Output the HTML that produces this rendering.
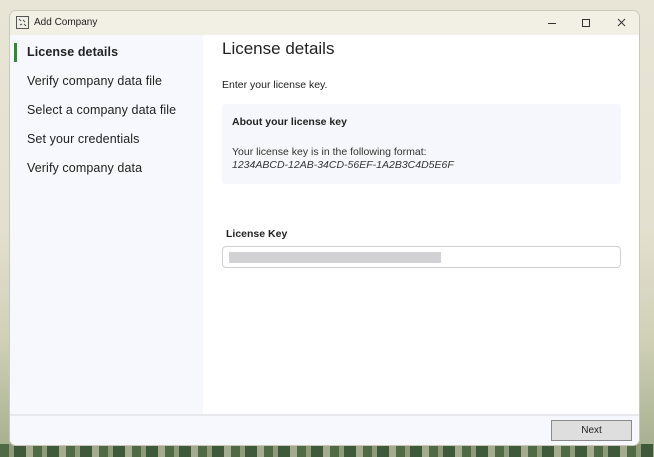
<!DOCTYPE html>
<html><head><style>
*{margin:0;padding:0;box-sizing:border-box}
body{width:654px;height:457px;overflow:hidden;font-family:"Liberation Sans",sans-serif;position:relative;
background:linear-gradient(180deg,#e9e5d6 0%,#e4e0cf 50%,#cfd0b6 75%,#a3ad8c 100%);}
.bot{position:absolute;left:0;top:444px;width:654px;height:13px;background:repeating-linear-gradient(90deg,#4f6a45 0 9px,#8f9a78 9px 14px,#3f5a3a 14px 26px,#a5ab8f 26px 33px)}
.win{position:absolute;left:9px;top:10px;width:631px;height:436px;background:#fff;border:1px solid #c9c7bb;border-radius:7px;overflow:hidden}
.tb{height:24px;background:#f2f0e5;position:relative;font-size:10px;color:#222}
.tb .t{position:absolute;left:24px;top:6px}
.nav{position:absolute;left:0;top:24px;width:193px;height:380px;background:#f7f8fd}
.nav div{position:absolute;left:17px;font-size:12.5px;color:#222;letter-spacing:0.1px}
.main{position:absolute;left:193px;top:24px;right:0;height:380px}
.foot{position:absolute;left:0;top:403px;width:100%;height:33px;background:#f7f8fd;border-top:2px solid #e8e8ec}
</style></head><body>
<div class="bot"></div>
<div class="win">
 <div class="tb">
  <svg style="position:absolute;left:6px;top:5px" width="13" height="13" viewBox="0 0 13 13"><rect x=".5" y=".5" width="12" height="12" fill="none" stroke="#555"/><path d="M3 3l2 2M10 10l-2-2M4 9l2-1M7 4l2 2" stroke="#456" fill="none"/></svg>
  <span class="t">Add Company</span>
  <svg style="position:absolute;left:538px;top:6px" width="80" height="12"><path d="M0 6.5h8" stroke="#333"/><rect x="34.5" y="2.5" width="7" height="7" fill="none" stroke="#333"/><path d="M70 2l7 7M77 2l-7 7" stroke="#333"/></svg>
 </div>
 <div class="nav">
  <div style="left:4px;top:8px;width:3px;height:19px;background:#2e8b2e"></div>
  <div style="top:10px;font-weight:bold">License details</div>
  <div style="top:39px">Verify company data file</div>
  <div style="top:68px">Select a company data file</div>
  <div style="top:97px">Set your credentials</div>
  <div style="top:126px">Verify company data</div>
 </div>
 <div class="main">
  <div style="position:absolute;left:19px;top:4px;font-size:17px;color:#222">License details</div>
  <div style="position:absolute;left:19px;top:44px;font-size:10.5px;color:#222">Enter your license key.</div>
  <div style="position:absolute;left:19px;top:69px;width:399px;height:80px;background:#f6f7fc;border-radius:3px">
   <div style="position:absolute;left:10px;top:12px;font-size:10.5px;font-weight:bold;color:#222">About your license key</div>
   <div style="position:absolute;left:10px;top:42px;font-size:10.5px;color:#333">Your license key is in the following format:</div>
   <div style="position:absolute;left:10px;top:55px;font-size:10.5px;color:#333;font-style:italic">1234ABCD-12AB-34CD-56EF-1A2B3C4D5E6F</div>
  </div>
  <div style="position:absolute;left:23px;top:193px;font-size:10.5px;font-weight:bold;color:#222">License Key</div>
  <div style="position:absolute;left:19px;top:211px;width:399px;height:22px;border:1px solid #d0d0d4;border-radius:4px">
   <div style="position:absolute;left:6px;top:5px;width:212px;height:11px;background:#d2d2d4"></div>
  </div>
 </div>
 <div class="foot">
  <div style="position:absolute;left:541px;top:4px;width:81px;height:21px;background:#dedede;border:1px solid #8a8a8a;font-size:10px;text-align:center;line-height:19px;color:#222">Next</div>
 </div>
</div>
</body></html>
